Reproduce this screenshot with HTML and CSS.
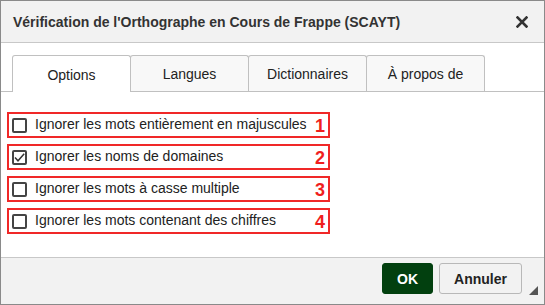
FILE: index.html
```html
<!DOCTYPE html>
<html lang="fr">
<head>
<meta charset="utf-8">
<link rel="stylesheet" href="styles.css">
</head>
<body>
<div class="dialog">
  <div class="titlebar">
    <span class="title">Vérification de l'Orthographe en Cours de Frappe (SCAYT)</span>
    <svg class="close" width="12" height="12" viewBox="0 0 12 12"><path d="M1.5 1.5 L10.5 10.5 M10.5 1.5 L1.5 10.5" stroke="#333" stroke-width="2.6" stroke-linecap="square"/></svg>
  </div>
  <div class="tabstrip">
    <div class="tab active">Options</div>
    <div class="tab">Langues</div>
    <div class="tab">Dictionnaires</div>
    <div class="tab">À propos de</div>
  </div>
  <div class="content">
    <div class="row"><span class="cb"></span><span class="label">Ignorer les mots entièrement en majuscules</span><span class="num">1</span></div>
    <div class="row"><span class="cb"><svg width="11" height="11" viewBox="0 0 11 11"><path d="M1 5.5 L4 8.8 L10.2 1.8" fill="none" stroke="#333" stroke-width="1.5"/></svg></span><span class="label">Ignorer les noms de domaines</span><span class="num">2</span></div>
    <div class="row"><span class="cb"></span><span class="label">Ignorer les mots à casse multiple</span><span class="num">3</span></div>
    <div class="row"><span class="cb"></span><span class="label">Ignorer les mots contenant des chiffres</span><span class="num">4</span></div>
  </div>
  <div class="footer">
    <button class="btn ok">OK</button>
    <button class="btn cancel">Annuler</button>
    <span class="resize"></span>
  </div>
</div>
</body>
</html>
```

FILE: styles.css
```css
html, body {
  margin: 0;
  padding: 0;
  background: #fff;
}
.dialog {
  width: 545px;
  height: 305px;
  box-sizing: border-box;
  border: 1px solid #8a8a8a;
  display: flex;
  flex-direction: column;
  font-family: "Liberation Sans", Arial, sans-serif;
  color: #222;
  position: relative;
}
.titlebar {
  height: 41px;
  flex: none;
  background: #f2f2f2;
  border-bottom: 1px solid #c8c8c8;
  display: flex;
  align-items: center;
  justify-content: space-between;
  padding: 0 16px 0 12px;
}
.title {
  font-weight: bold;
  font-size: 14px;
  color: #333;
}
.close {
  display: block;
  margin-top: 1px;
}
.tabstrip {
  flex: none;
  display: flex;
  padding: 12px 0 0 11px;
  border-bottom: 1px solid #c0c0c0;
  height: 36px;
}
.tab {
  width: 119px;
  height: 36px;
  box-sizing: border-box;
  border: 1px solid #c0c0c0;
  border-bottom: none;
  border-radius: 3px 3px 0 0;
  background: #f8f8f8;
  font-size: 14px;
  color: #222;
  display: flex;
  align-items: center;
  justify-content: center;
  margin-left: -1px;
  padding-top: 1px;
}
.tab:first-child {
  margin-left: 0;
}
.tab.active {
  background: #fff;
  height: 37px;
  margin-bottom: -1px;
  position: relative;
  z-index: 1;
}
.content {
  flex: 1;
  background: #fff;
  padding: 20px 0 0 6px;
  display: flex;
  flex-direction: column;
  gap: 6px;
}
.row {
  width: 323px;
  height: 26px;
  box-sizing: border-box;
  border: 2px solid #f02828;
  display: flex;
  align-items: center;
  padding: 0 3px 0 3px;
}
.cb {
  width: 15px;
  height: 15px;
  box-sizing: border-box;
  border: 2px solid #444;
  border-radius: 2px;
  flex: none;
  display: flex;
  align-items: center;
  justify-content: center;
}
.cb svg {
  display: block;
}
.label {
  font-size: 14px;
  color: #222;
  margin-left: 8px;
  flex: 1;
  margin-top: -2px;
}
.num {
  color: #f01e1e;
  font-size: 18px;
  font-weight: bold;
  margin-top: 2px;
}
.footer {
  flex: none;
  height: 41px;
  background: #f2f2f2;
  border-top: 1px solid #c8c8c8;
  display: flex;
  justify-content: flex-end;
  align-items: flex-start;
  padding: 5px 22px 0 0;
}
.btn {
  height: 31px;
  box-sizing: border-box;
  font-family: "Liberation Sans", Arial, sans-serif;
  font-weight: bold;
  font-size: 14px;
  border-radius: 3px;
  padding: 0;
  cursor: pointer;
}
.ok {
  width: 51px;
  background: #02400f;
  border: 1px solid #02400f;
  color: #fff;
}
.cancel {
  width: 83px;
  margin-left: 6px;
  background: #f2f2f2;
  border: 1px solid #b8b8b8;
  color: #222;
}
.resize {
  position: absolute;
  right: 6px;
  bottom: 9px;
  width: 0;
  height: 0;
  border-style: solid;
  border-width: 0 0 9px 9px;
  border-color: transparent transparent #555 transparent;
}
```
